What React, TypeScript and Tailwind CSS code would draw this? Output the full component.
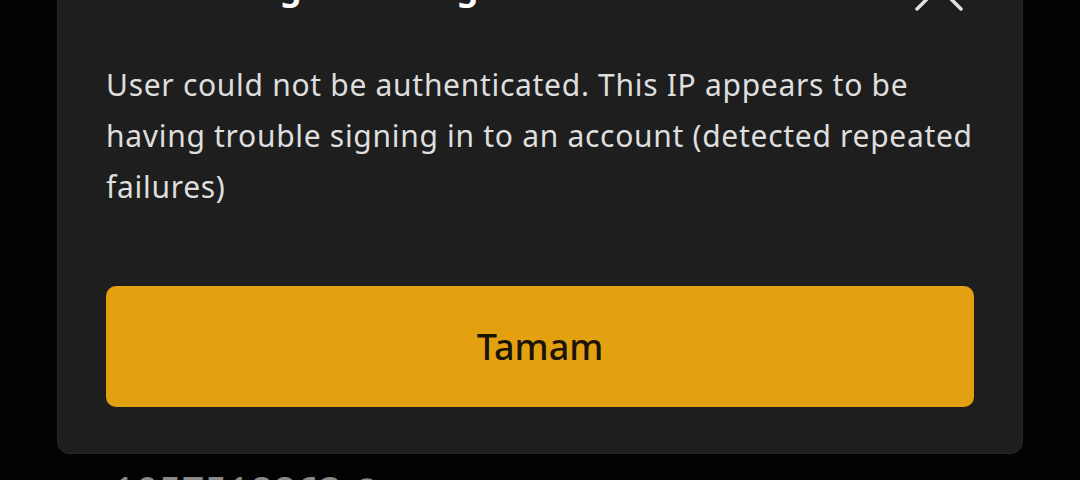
import React from "react";

function CloseIcon() {
  return (
    <svg width="48" height="48" viewBox="0 0 48 48" fill="none">
      <path
        d="M2 2 L46 46 M46 2 L2 46"
        stroke="#e2e2e2"
        strokeWidth="3.5"
        strokeLinecap="round"
      />
    </svg>
  );
}

function InfoCircle() {
  return (
    <svg width="26" height="26" viewBox="0 0 26 26" fill="none">
      <circle cx="13" cy="13" r="11.5" stroke="#8a8a8a" strokeWidth="2.5" />
    </svg>
  );
}

export default function App() {
  return (
    <div
      className="h-[480px] w-[1080px] overflow-hidden bg-[#030303]"
      style={{ fontFamily: '"Noto Sans", "Noto Sans CJK KR", sans-serif' }}
    >
      <div className="mx-[57px] mt-[-38px] w-[966px] rounded-[12px] border border-[#262626] bg-[#1e1e1e] px-[48px] pb-[46px]">
        <div className="flex h-[48px] items-center justify-between">
          <div className="text-[34px] font-bold leading-[48px] tracking-[-0.5px] text-white">
            Account login warning
          </div>
          <div className="mr-[11px]">
            <CloseIcon />
          </div>
        </div>
        <p className="mt-[48px] text-[30px] leading-[51px] tracking-[0.7px] text-[#dedede]">
          User could not be authenticated. This IP appears to be having trouble
          signing in to an account (detected repeated failures)
        </p>
        <button className="mt-[74px] flex h-[121px] w-full items-center justify-center rounded-[10px] bg-[#e3a112] text-[36px] font-medium text-[#1b1409]">
          Tamam
        </button>
      </div>
      <div className="ml-[113px] mt-[13px] flex items-center gap-[12px]">
        <span className="text-[40px] leading-[48px] text-[#8a8a8a]">
          1057518863
        </span>
        <InfoCircle />
      </div>
    </div>
  );
}
